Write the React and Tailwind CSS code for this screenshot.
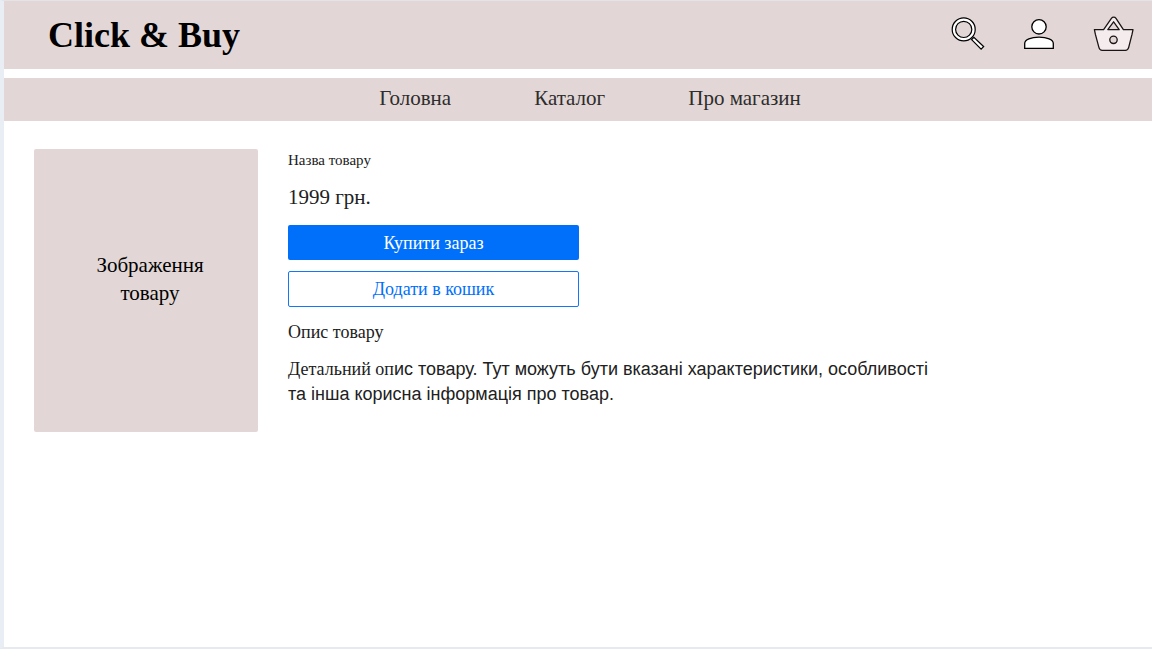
function SearchIcon() {
  return (
    <svg width="34" height="34" viewBox="0 0 34 34" fill="none" aria-hidden="true">
      <path d="M20.6 22.6 L22.9 20.3 L32.6 29.6 L30.1 32.1 Z" fill="#fff" stroke="#000" strokeWidth="1.3" />
      <circle cx="12.7" cy="12.4" r="9.8" stroke="#000" strokeWidth="4.6" />
      <circle cx="12.7" cy="12.4" r="9.8" stroke="#fff" strokeWidth="2.2" />
    </svg>
  );
}

function UserIcon() {
  return (
    <svg width="32" height="32" viewBox="0 0 32 32" fill="#fff" stroke="#000" strokeWidth="1.3" aria-hidden="true">
      <circle cx="16" cy="8.8" r="7.2" />
      <path d="M1.7 30.3 V25.5 C1.7 21.5 8 19.2 16 19.2 S30.3 21.5 30.3 25.5 V30.3 Z" />
    </svg>
  );
}

function BasketIcon() {
  return (
    <svg width="42" height="36" viewBox="0 0 42 36" fill="#f5eded" stroke="#1a1414" strokeWidth="1.3" strokeLinejoin="round" aria-hidden="true">
      <path d="M1.4 13.6 H10.6 L18.4 2.4 C19.6 0.8 21.8 0.8 23 2.4 L30.4 13.6 H40 L39 18.4 L35.7 31.4 C35.1 33.6 34.3 34.4 32.4 34.4 H9.2 C7.3 34.4 6.5 33.6 5.9 31.4 L2.4 18.4 Z" />
      <path d="M14.8 13.6 L20.6 5.8 L26.2 13.6 Z" fill="#e2d7d6" />
      <circle cx="20.5" cy="23.8" r="3.7" fill="#e2d7d6" />
    </svg>
  );
}

export default function App() {
  return (
    <div className="flex min-h-screen flex-col border-t border-b-2 border-l-4 border-t-[#e3e3e8] border-b-[#e6e9ee] border-l-[#e9edf4] bg-white font-['Liberation_Serif',serif] text-[#212121]">
      <header className="flex h-17 items-center justify-between bg-[#e2d7d6] pr-[17px] pl-11">
        <h1 className="text-4xl font-bold text-black">
          <a href="#home">Click &amp; Buy</a>
        </h1>
        <div className="flex items-center gap-[38px] pb-0.5">
          <button type="button" aria-label="Пошук">
            <SearchIcon />
          </button>
          <button type="button" aria-label="Профіль">
            <UserIcon />
          </button>
          <button type="button" aria-label="Кошик">
            <BasketIcon />
          </button>
        </div>
      </header>

      <nav className="mt-[9px] flex h-[43px] items-center justify-center gap-[83px] bg-[#e2d7d6] pb-1 pl-6 text-[21px] leading-7 text-[#2e2c2c]">
        <a href="#home">Головна</a>
        <a href="#catalog">Каталог</a>
        <a href="#about">Про магазин</a>
      </nav>

      <main className="flex items-start gap-[30px] px-[30px] pt-7">
        <div className="flex h-[283px] w-56 shrink-0 items-center justify-center rounded-xs bg-[#e2d7d6] pb-6 pl-2 text-center text-[21px] leading-7 text-black">
          Зображення
          <br />
          товару
        </div>

        <section className="max-w-[660px] flex-1">
          <h2 className="text-[15px] leading-[22px]">Назва товару</h2>
          <p className="mt-3 text-[21px] leading-7">1999 грн.</p>
          <div className="mt-3.5 flex w-[291px] flex-col gap-[11px] text-[18px] leading-6">
            <button type="button" className="h-[35px] rounded-xs bg-[#0070fb] text-white">
              Купити зараз
            </button>
            <button type="button" className="h-9 rounded-xs border border-[#1478f5] text-[#0070fb]">
              Додати в кошик
            </button>
          </div>
          <h3 className="mt-3 text-[18px] leading-[26px]">Опис товару</h3>
          <p className="mt-3 font-['Liberation_Sans',sans-serif] text-[18px] leading-[25px]">
            <span className="font-['Liberation_Serif',serif]">Детальний оп</span>ис товару. Тут можуть бути вказані
            характеристики, особливості та інша корисна інформація про товар.
          </p>
        </section>
      </main>
    </div>
  );
}
